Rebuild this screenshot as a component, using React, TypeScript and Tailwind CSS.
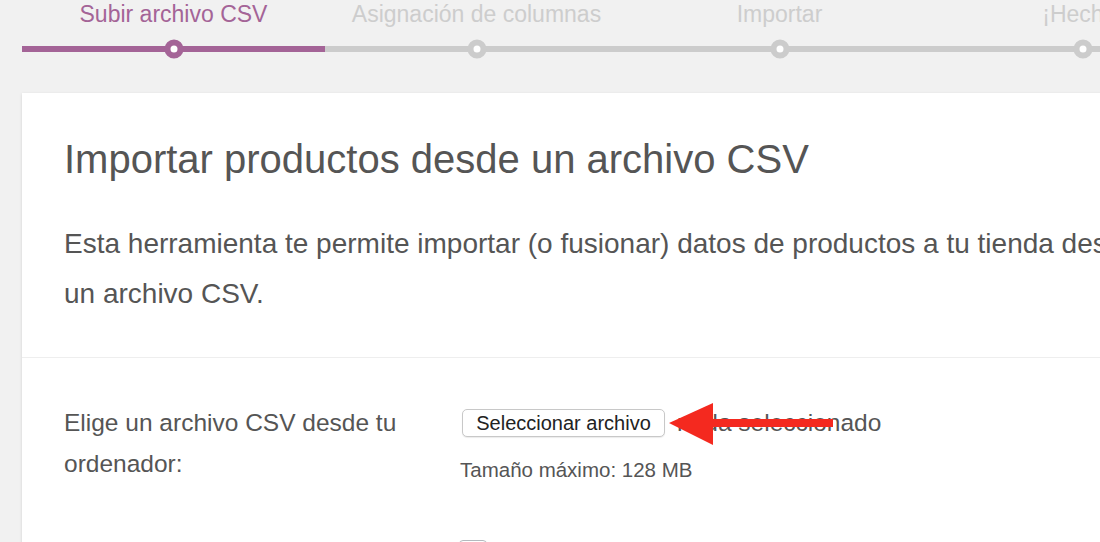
import React from "react";

const steps = [
  { label: "Subir archivo CSV", active: true },
  { label: "Asignación de columnas", active: false },
  { label: "Importar", active: false },
  { label: "¡Hecho!", active: false },
];

export default function App() {
  return (
    <div className="relative w-[1100px] h-[542px] overflow-hidden bg-[#f1f1f1] font-['Liberation_Sans',Arial,sans-serif]">
      <div className="w-[1320px] pl-[22px]">
        <ol className="flex w-[1212px]">
          {steps.map((s) => (
            <li key={s.label} className="flex w-[303px] flex-col items-center">
              <span
                className={
                  "whitespace-nowrap text-[23px] leading-[28px] " +
                  (s.active ? "text-[#a46497]" : "text-[#cdcdcd]")
                }
              >
                {s.label}
              </span>
              <div
                className={
                  "relative mt-[18px] h-[6px] w-full " +
                  (s.active ? "bg-[#a46497]" : "bg-[#cccccc]")
                }
              >
                <span
                  className={
                    "absolute left-1/2 top-1/2 h-[19px] w-[19px] -translate-x-1/2 -translate-y-1/2 rounded-full border-[6px] bg-white " +
                    (s.active ? "border-[#a46497]" : "border-[#cccccc]")
                  }
                />
              </div>
            </li>
          ))}
        </ol>

        <div className="mt-[41px] w-[1290px] bg-white shadow-[0_1px_3px_rgba(0,0,0,0.13)]">
          <header className="border-b border-[#eeeeee] px-[42px] pb-[38px] pt-[42px]">
            <h2 className="whitespace-nowrap text-[40px] leading-[48px] text-[#555555]">
              Importar productos desde un archivo CSV
            </h2>
            <p className="mt-[36px] text-[28px] leading-[50px] text-[#555555]">
              <span className="block whitespace-nowrap">
                Esta herramienta te permite importar (o fusionar) datos de productos a tu tienda desde
              </span>
              <span className="block whitespace-nowrap">un archivo CSV.</span>
            </p>
          </header>

          <section className="px-[42px] pt-[44px]">
            <div className="flex">
              <div className="w-[396px] text-[24.5px] leading-[41px] text-[#555555]">
                <div>Elige un archivo CSV desde tu</div>
                <div>ordenador:</div>
              </div>
              <div className="flex flex-col">
                <div className="mt-[7px] flex items-center">
                  <button className="ml-[2px] h-[28px] w-[203px] rounded-[5px] border border-[#c8c8c8] bg-white text-[20px] leading-[26px] text-[#222222] shadow-[0_1px_1px_rgba(0,0,0,0.08)]">
                    Seleccionar archivo
                  </button>
                  <span className="ml-[12px] whitespace-nowrap text-[24.5px] leading-[28px] text-[#555555]">
                    nada seleccionado
                  </span>
                </div>
                <div className="mt-[21px] whitespace-nowrap text-[20.5px] leading-[24px] text-[#555555]">
                  Tamaño máximo: 128 MB
                </div>
              </div>
            </div>

            <div className="mt-[56px] flex pb-[40px]">
              <div className="w-[396px]" />
              <div className="flex items-start">
                <span className="ml-[-1px] h-[28px] w-[28px] rounded-[4px] border border-[#b4b9be] bg-white" />
              </div>
            </div>
          </section>
        </div>
      </div>

      <svg
        className="absolute left-[669px] top-[402px]"
        width="166"
        height="45"
        viewBox="0 0 166 45"
      >
        <rect x="40" y="17" width="124" height="8" fill="#f4291f" />
        <polygon points="0,21 44,1 44,43" fill="#f4291f" />
      </svg>
    </div>
  );
}
